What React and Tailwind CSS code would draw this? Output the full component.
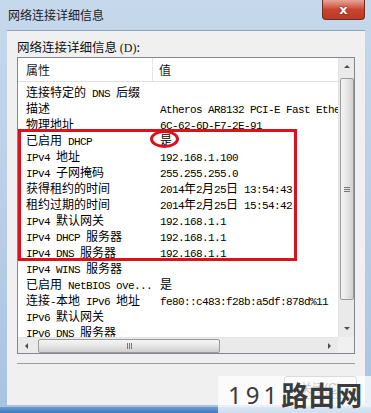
import React from "react";

const rows = [
  ["连接特定的 DNS 后缀", ""],
  ["描述", "Atheros AR8132 PCI-E Fast Ethe"],
  ["物理地址", "6C-62-6D-F7-2E-91"],
  ["已启用 DHCP", "是"],
  ["IPv4 地址", "192.168.1.100"],
  ["IPv4 子网掩码", "255.255.255.0"],
  ["获得租约的时间", "2014年2月25日 13:54:43"],
  ["租约过期的时间", "2014年2月25日 15:54:42"],
  ["IPv4 默认网关", "192.168.1.1"],
  ["IPv4 DHCP 服务器", "192.168.1.1"],
  ["IPv4 DNS 服务器", "192.168.1.1"],
  ["IPv4 WINS 服务器", ""],
  ["已启用 NetBIOS ove...", "是"],
  ["连接-本地 IPv6 地址", "fe80::c483:f28b:a5df:878d%11"],
  ["IPv6 默认网关", ""],
  ["IPv6 DNS 服务器", ""],
];

function Mixed({ text }) {
  const parts = text.split(/([\x20-\x7e]+)/).filter(Boolean);
  return (
    <>
      {parts.map((s, i) =>
        /^[\x20-\x7e]+$/.test(s) ? (
          <span key={i} className="font-['Liberation_Mono',monospace] text-[11px] leading-[14px] tracking-[-0.6px]">
            {s}
          </span>
        ) : (
          <span key={i} className="font-['Noto_Sans_CJK_SC',sans-serif] text-[12px] leading-[14px]">
            {s}
          </span>
        )
      )}
    </>
  );
}

function Arrow({ dir }) {
  const pts = {
    up: "1,5 4,2 7,5",
    down: "1,2 4,5 7,2",
    left: "5,1 2,4 5,7",
    right: "2,1 5,4 2,7",
  }[dir];
  return (
    <svg width="8" height="8" viewBox="0 0 8 8">
      <polygon points={pts} fill="#4d4d4d" />
    </svg>
  );
}

export default function App() {
  return (
    <div className="relative w-[371px] h-[413px] overflow-hidden bg-gradient-to-b from-[#c5d8ec] via-[#bacfe6] to-[#a9c3e0] font-['Noto_Sans_CJK_SC',sans-serif]">
      {/* title bar */}
      <div className="h-[30px] flex items-center pl-[8px] text-[12px] text-[#1b1b1b]">网络连接详细信息</div>
      {/* close button */}
      <div className="absolute top-0 left-[322px] w-[43px] h-[20px] rounded-b-[4px] border border-t-0 border-[#6d2b22] bg-gradient-to-b from-[#e4a596] via-[#c9442f] to-[#b93a25] flex items-center justify-center">
        <span className="font-['DejaVu_Sans',sans-serif] font-bold text-[13px] text-white leading-none [text-shadow:0_0_2px_#4a1410]">x</span>
      </div>

      {/* body */}
      <div className="ml-[7px] mr-[6px] h-[375px] bg-[#f0f0f0] border-t border-[#8ea6c2] px-[10px] pt-[8px]">
        <div className="h-[16px] leading-[16px] text-[12.5px] text-[#111] mb-[2px]">
          网络连接详细信息 <span className="font-['Liberation_Serif',serif] text-[12px]">(D)</span>:
        </div>

        {/* list */}
        <div className="w-[338px] h-[297px] border border-[#828790] bg-white flex flex-col">
          <div className="flex h-[279px]">
            <div className="w-[320px] overflow-hidden">
              {/* header */}
              <div className="flex h-[24px] border-b border-[#e0e0e0] text-[12px] text-[#1a1a1a]">
                <div className="w-[135px] pl-[8px] flex items-center border-r border-[#e5e5e5]">属性</div>
                <div className="pl-[6px] flex items-center">值</div>
              </div>
              {rows.map(([a, b], i) => (
                <div key={i} className="flex items-center h-[16px] whitespace-pre text-black">
                  <div className="w-[135px] shrink-0 pl-[8px]">
                    <Mixed text={a} />
                  </div>
                  <div className="pl-[7px] shrink-0">
                    <Mixed text={b} />
                  </div>
                </div>
              ))}
            </div>
            {/* vertical scrollbar */}
            <div className="w-[16px] bg-[#eaeaea] border-l border-[#e3e3e3] flex flex-col items-center">
              <div className="h-[17px] flex items-center justify-center">
                <Arrow dir="up" />
              </div>
              <div className="mt-[3px] w-[14px] h-[222px] rounded-[2px] border border-[#9b9b9b] bg-gradient-to-r from-[#f4f4f4] via-[#e6e6e6] to-[#cfcfcf] flex items-center justify-center">
                <div className="flex flex-col gap-[1px]">
                  <div className="w-[6px] h-[1px] bg-[#777]" />
                  <div className="w-[6px] h-[1px] bg-[#777]" />
                  <div className="w-[6px] h-[1px] bg-[#777]" />
                </div>
              </div>
              <div className="flex-1" />
              <div className="h-[17px] flex items-center justify-center">
                <Arrow dir="down" />
              </div>
            </div>
          </div>
          {/* horizontal scrollbar */}
          <div className="flex h-[16px]">
            <div className="w-[320px] bg-[#eaeaea] border-t border-[#e3e3e3] flex items-center">
              <div className="w-[17px] flex items-center justify-center">
                <Arrow dir="left" />
              </div>
              <div className="ml-[3px] w-[182px] h-[14px] rounded-[2px] border border-[#9b9b9b] bg-gradient-to-b from-[#f4f4f4] via-[#e6e6e6] to-[#cfcfcf] flex items-center justify-center">
                <div className="flex gap-[1px]">
                  <div className="w-[1px] h-[6px] bg-[#777]" />
                  <div className="w-[1px] h-[6px] bg-[#777]" />
                  <div className="w-[1px] h-[6px] bg-[#777]" />
                </div>
              </div>
              <div className="flex-1" />
              <div className="w-[17px] flex items-center justify-center">
                <Arrow dir="right" />
              </div>
            </div>
            <div className="w-[16px] bg-[#f0f0f0]" />
          </div>
        </div>

        {/* separator */}
        <div className="mt-[9px] w-[338px] h-[1px] bg-[#a0a0a0]" />

        {/* button */}
        <div className="mt-[12px] flex justify-end">
          <div className="w-[73px] h-[23px] mr-[-2px] rounded-[3px] border border-[#707070] bg-gradient-to-b from-[#f4f4f4] to-[#dcdcdc] flex items-center justify-center text-[12px] text-[#222]">
            关闭<span className="font-['Liberation_Sans',sans-serif]">(</span>
            <span className="font-['Liberation_Sans',sans-serif] underline">C</span>
            <span className="font-['Liberation_Sans',sans-serif]">)</span>
          </div>
        </div>
      </div>
      {/* bottom frame edge */}
      <div className="absolute left-0 right-0 bottom-0 h-[6px] bg-gradient-to-b from-[#6d9ed4] to-[#3f78bb]" />

      {/* red annotation rectangle */}
      <div className="absolute left-[18px] top-[129px] w-[279px] h-[132px] border-[3px] border-[#d9121c]" />
      {/* red ellipse */}
      <div className="absolute left-[150px] top-[130px] w-[29px] h-[18px] rounded-[50%] border-[3px] border-[#d9121c]" />

      {/* watermark */}
      <div className="absolute left-[218px] top-[376px] w-[153px] h-[37px] bg-white/75 flex items-center pl-[10px] text-[#3b3b3b]">
        <span className="font-['Noto_Sans',sans-serif] text-[24px] tracking-[4px] leading-none">191</span>
        <span className="font-['Noto_Sans_CJK_SC',sans-serif] font-bold text-[27px] leading-none">路由网</span>
      </div>
    </div>
  );
}
